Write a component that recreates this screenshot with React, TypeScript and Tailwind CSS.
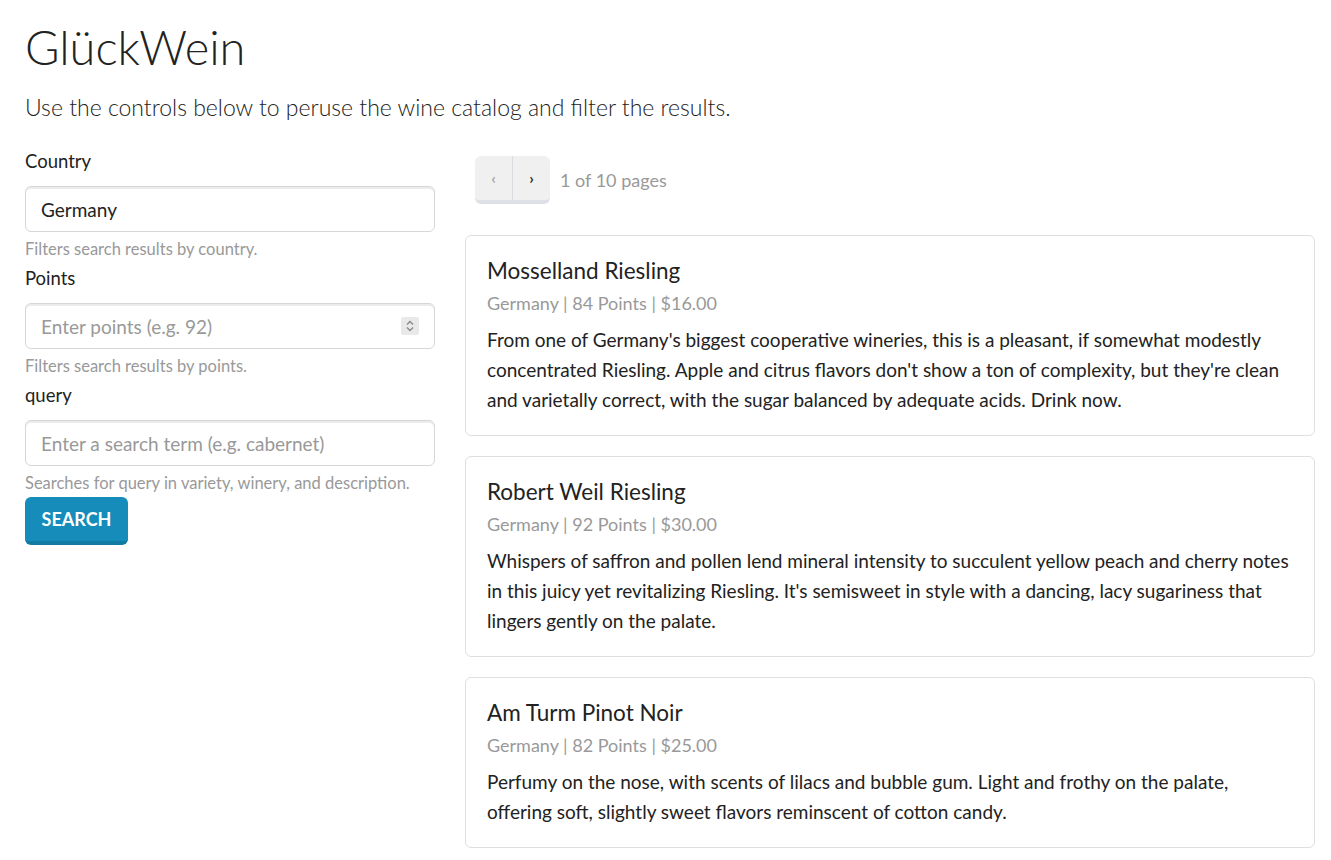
import type { ReactNode } from 'react';

interface Wine {
  title: string;
  country: string;
  points: number;
  price: string;
  description: string;
}

const wines: Wine[] = [
  {
    title: 'Mosselland Riesling',
    country: 'Germany',
    points: 84,
    price: '$16.00',
    description:
      "From one of Germany's biggest cooperative wineries, this is a pleasant, if somewhat modestly concentrated Riesling. Apple and citrus flavors don't show a ton of complexity, but they're clean and varietally correct, with the sugar balanced by adequate acids. Drink now.",
  },
  {
    title: 'Robert Weil Riesling',
    country: 'Germany',
    points: 92,
    price: '$30.00',
    description:
      "Whispers of saffron and pollen lend mineral intensity to succulent yellow peach and cherry notes in this juicy yet revitalizing Riesling. It's semisweet in style with a dancing, lacy sugariness that lingers gently on the palate.",
  },
  {
    title: 'Am Turm Pinot Noir',
    country: 'Germany',
    points: 82,
    price: '$25.00',
    description:
      'Perfumy on the nose, with scents of lilacs and bubble gum. Light and frothy on the palate, offering soft, slightly sweet flavors reminscent of cotton candy.',
  },
];

function Field({ label, help, first, children }: { label: string; help: string; first?: boolean; children: ReactNode }) {
  return (
    <div className={first ? '' : 'mt-[2px]'}>
      <label className="block text-[18.5px] leading-[30px] mb-[10px]">{label}</label>
      {children}
      <div className="mt-[5px] text-[16.5px] leading-[24px] text-[#999]">{help}</div>
    </div>
  );
}

const inputCls =
  'w-full h-[46px] rounded-[6px] border border-[#d6d6d6] px-[15px] text-[19px] text-[#222] placeholder:text-[#999] shadow-[inset_0_2px_0_rgba(0,0,0,0.075)] outline-none bg-white';

function WineCard({ wine }: { wine: Wine }) {
  return (
    <div className="rounded-[6px] border border-[#dfdfdf] px-[21px] py-[20px]">
      <h5 className="text-[22.5px] leading-[30px]">{wine.title}</h5>
      <div className="mt-[2px] text-[18px] leading-[30px] text-[#999]">
        {wine.country} | {wine.points} Points | {wine.price}
      </div>
      <p className="mt-[7px] text-[19px] leading-[30px]">{wine.description}</p>
    </div>
  );
}

export default function App() {
  return (
    <div className="min-h-screen bg-white text-[#222] font-['Lato',sans-serif] px-[25px] pt-[17px] pb-[12px]">
      <h1 className="text-[47px] leading-[60px] font-light">GlückWein</h1>
      <p className="mt-[15px] text-[23px] leading-[30px] font-light">
        Use the controls below to peruse the wine catalog and filter the results.
      </p>

      <div className="mt-[24px] flex gap-[30px]">
        <div className="w-[410px] shrink-0">
          <Field label="Country" help="Filters search results by country." first>
            <input className={inputCls} defaultValue="Germany" />
          </Field>
          <Field label="Points" help="Filters search results by points.">
            <div className="relative">
              <input className={inputCls} placeholder="Enter points (e.g. 92)" />
              <span className="absolute right-[16px] top-[14px] w-[18px] h-[18px] rounded-[2px] bg-[#e9e9e9] flex items-center justify-center">
                <svg width="10" height="14" viewBox="0 0 10 14" fill="none" stroke="#888" strokeWidth="1.3">
                  <path d="M2 5.5 5 2.5 8 5.5" />
                  <path d="M2 8.5 5 11.5 8 8.5" />
                </svg>
              </span>
            </div>
          </Field>
          <Field label="query" help="Searches for query in variety, winery, and description.">
            <input className={inputCls} placeholder="Enter a search term (e.g. cabernet)" />
          </Field>
          <button className="mt-[2px] h-[48px] w-[103px] rounded-[6px] bg-[#158cba] border-b-4 border-[#127ba3] text-white text-[18px] font-bold uppercase">
            Search
          </button>
        </div>

        <div className="flex-1 mr-[-9px]">
          <div className="mt-[10px] ml-[10px] flex items-center">
            <div className="flex rounded-[6px] overflow-hidden border-b-4 border-[#dde1e6] bg-[#f0f0f0]">
              <button className="w-[37px] h-[44px] text-[16px] font-bold text-[#aaa]">‹</button>
              <button className="w-[38px] h-[44px] text-[16px] font-bold text-[#333] border-l border-[#d9dde2]">›</button>
            </div>
            <span className="ml-[10px] text-[18px] text-[#999]">1 of 10 pages</span>
          </div>

          <div className="mt-[31px] flex flex-col gap-[20px]">
            {wines.map((w) => (
              <WineCard key={w.title} wine={w} />
            ))}
          </div>
        </div>
      </div>
    </div>
  );
}
